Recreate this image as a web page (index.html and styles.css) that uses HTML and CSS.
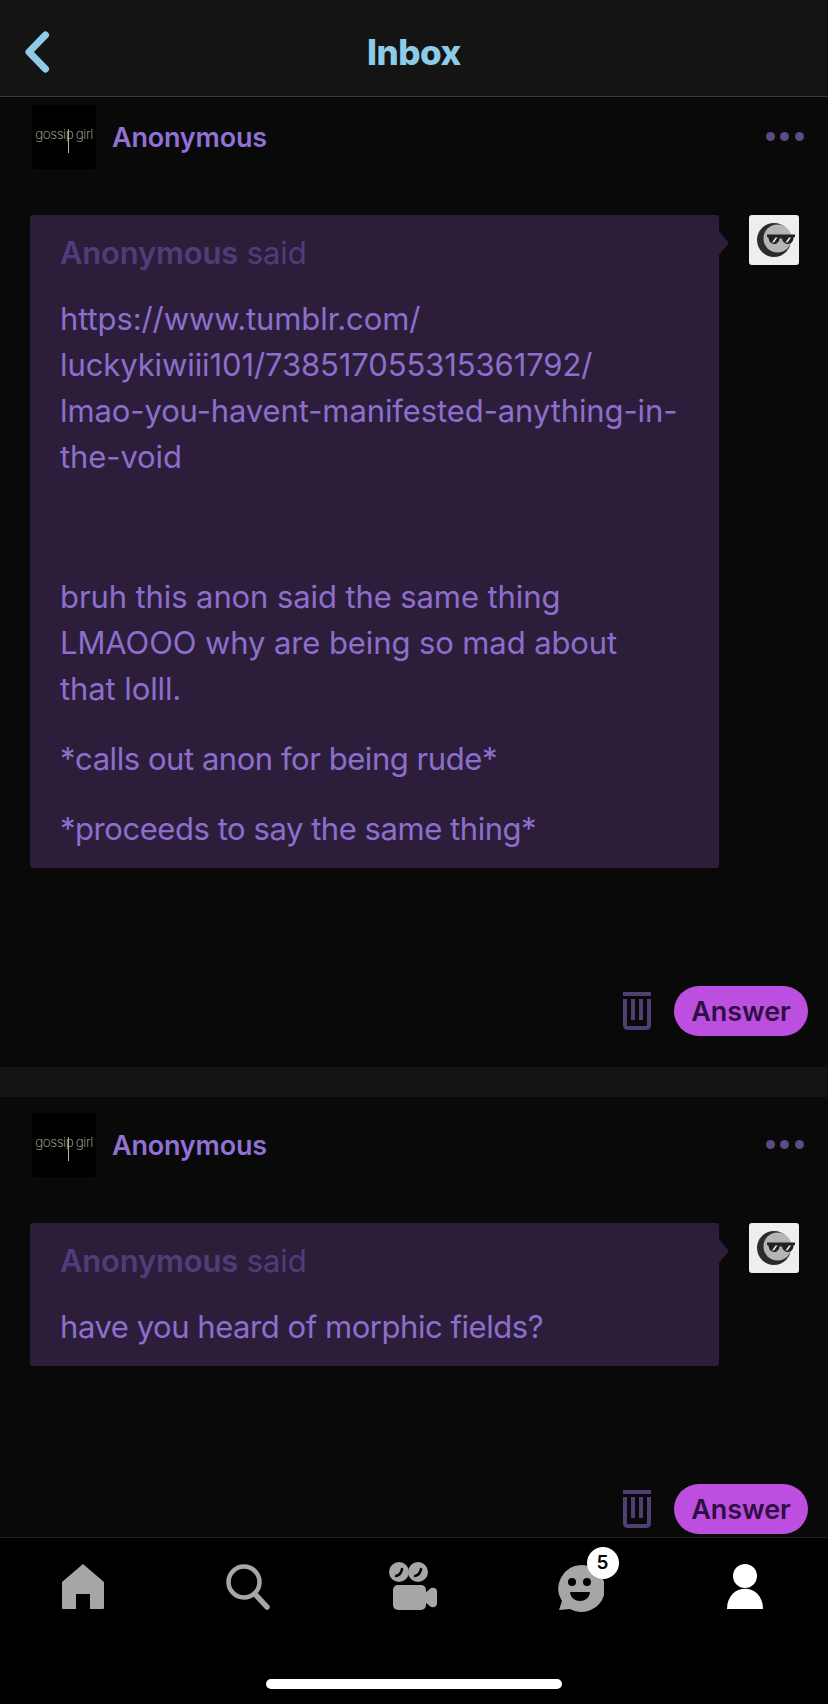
FILE: index.html
```html
<!DOCTYPE html>
<html lang="en">
<head>
  <meta charset="UTF-8">
  <meta name="viewport" content="width=device-width, initial-scale=1.0">
  <title>Inbox</title>
  <link rel="stylesheet" href="styles.css">
</head>
<body>
  <div class="app">
    <header class="top-bar">
      <svg class="back-icon" width="26" height="42" viewBox="0 0 26 42">
        <path d="M21.500 4 L5 21 L21.500 38" fill="none" stroke="#8ecbe8" stroke-width="7" stroke-linecap="round" stroke-linejoin="round"/>
      </svg>
      <h1>Inbox</h1>
    </header>

    <main class="feed">
      <section class="card card-first">
        <div class="card-head">
          <div class="blog-avatar"><span>gossip girl</span><i></i></div>
          <div class="blog-name">Anonymous</div>
          <div class="more"><i></i><i></i><i></i></div>
        </div>
        <div class="ask">
          <div class="bubble">
            <div class="asker"><b>Anonymous</b> said</div>
            <p>https://www.tumblr.com/<br>luckykiwiii101/738517055315361792/<br>lmao-you-havent-manifested-anything-in-<br>the-void</p>
            <p class="gap-big">bruh this anon said the same thing<br>LMAOOO why are being so mad about<br>that lolll.</p>
            <p class="tight">*calls out anon for being rude*</p>
            <p class="tight">*proceeds to say the same thing*</p>
          </div>
          <div class="anon-avatar">
            <svg width="50" height="50" viewBox="0 0 50 50">
              <circle cx="25" cy="25" r="17" fill="#2b2b2b"/>
              <circle cx="28.500" cy="23.500" r="14" fill="#b5b5b5"/>
              <path d="M18 19.500 H46 V22 L44.500 22.500 C44.500 31 34 31 33 23.500 H30.500 C30 31 20 31 19.500 22.500 L18 22 Z" fill="#222"/>
              <path d="M23 27.500 L26.500 22.500 H28.500 L25 27.500 Z M36.500 27.500 L40 22.500 H42 L38.500 27.500 Z" fill="#eee"/>
            </svg>
          </div>
        </div>
        <div class="actions actions-first">
          <svg class="trash" width="30" height="38" viewBox="0 0 30 38">
            <path d="M1 2 H29 M3 7 V33 Q3 36 6 36 H24 Q27 36 27 33 V7 M11 7 V28 M19 7 V28" fill="none" stroke="#4f3f72" stroke-width="4"/>
          </svg>
          <button type="button" class="btn-answer">Answer</button>
        </div>
      </section>

      <section class="card">
        <div class="card-head">
          <div class="blog-avatar"><span>gossip girl</span><i></i></div>
          <div class="blog-name">Anonymous</div>
          <div class="more"><i></i><i></i><i></i></div>
        </div>
        <div class="ask">
          <div class="bubble">
            <div class="asker"><b>Anonymous</b> said</div>
            <p class="tight">have you heard of morphic fields?</p>
          </div>
          <div class="anon-avatar">
            <svg width="50" height="50" viewBox="0 0 50 50">
              <circle cx="25" cy="25" r="17" fill="#2b2b2b"/>
              <circle cx="28.500" cy="23.500" r="14" fill="#b5b5b5"/>
              <path d="M18 19.500 H46 V22 L44.500 22.500 C44.500 31 34 31 33 23.500 H30.500 C30 31 20 31 19.500 22.500 L18 22 Z" fill="#222"/>
              <path d="M23 27.500 L26.500 22.500 H28.500 L25 27.500 Z M36.500 27.500 L40 22.500 H42 L38.500 27.500 Z" fill="#eee"/>
            </svg>
          </div>
        </div>
        <div class="actions">
          <svg class="trash" width="30" height="38" viewBox="0 0 30 38">
            <path d="M1 2 H29 M3 7 V33 Q3 36 6 36 H24 Q27 36 27 33 V7 M11 7 V28 M19 7 V28" fill="none" stroke="#4f3f72" stroke-width="4"/>
          </svg>
          <button type="button" class="btn-answer">Answer</button>
        </div>
      </section>
    </main>

    <nav class="tab-bar">
      <div class="tabs">
        <div class="tab">
          <svg width="44" height="46" viewBox="0 0 44 46">
            <path d="M22 0 L43 18 V44 Q43 45 42 45 H29 V30 H15 V45 H2 Q1 45 1 44 V18 Z" fill="#a6a6a6"/>
          </svg>
        </div>
        <div class="tab">
          <svg width="44" height="46" viewBox="0 0 44 46">
            <circle cx="18" cy="18" r="15.500" fill="none" stroke="#a6a6a6" stroke-width="4.500"/>
            <path d="M29 30 L41 43" fill="none" stroke="#a6a6a6" stroke-width="5.500" stroke-linecap="round"/>
          </svg>
        </div>
        <div class="tab">
          <svg class="tab-camera" width="50" height="48" viewBox="0 0 50 48">
            <rect x="0" y="0" width="20" height="20" rx="10" fill="#a6a6a6"/>
            <rect x="19" y="0" width="20" height="20" rx="10" fill="#a6a6a6"/>
            <rect x="4" y="23" width="33" height="25" rx="5" fill="#a6a6a6"/>
            <path d="M36 31 L42 26 Q48 25 48 30 V41 Q48 46 42 45 L36 40 Z" fill="#a6a6a6"/>
            <path d="M7 14 Q12 13 13 7 M26 14 Q31 13 32 7" fill="none" stroke="#000" stroke-width="2.500" stroke-linecap="round"/>
          </svg>
        </div>
        <div class="tab">
          <div class="tab-activity">
            <svg width="48" height="48" viewBox="0 0 48 48">
              <path d="M25 1 A23.500 23.500 0 1 1 14 45 L3 46 L6 37 A23.500 23.500 0 0 1 25 1 Z" fill="#a6a6a6"/>
              <circle cx="16" cy="18" r="4" fill="#000"/>
              <circle cx="31" cy="18" r="4" fill="#000"/>
              <path d="M14 28 H34 C33 40 15 40 14 28 Z" fill="#000"/>
            </svg>
            <span class="badge">5</span>
          </div>
        </div>
        <div class="tab">
          <svg width="36" height="46" viewBox="0 0 36 46">
            <circle cx="18" cy="12" r="12" fill="#fff"/>
            <path d="M0 45 C0 18 36 18 36 45 Z" fill="#fff"/>
          </svg>
        </div>
      </div>
      <div class="home-indicator"></div>
    </nav>
  </div>
</body>
</html>
```

FILE: styles.css
```css
body {
  font-family: 'Inter', 'Noto Sans', sans-serif;
  background-color: #090909;
  margin: 0;
}

.app {
  display: flex;
  flex-direction: column;
  height: 100vh;
  overflow: hidden;
}

.top-bar {
  display: flex;
  align-items: center;
  justify-content: center;
  position: relative;
  flex: none;
  box-sizing: border-box;
  height: 97px;
  padding-top: 8px;
  background-color: #141414;
  border-bottom: 1px solid #3a3a3a;
}

.top-bar h1 {
  margin: 0;
  font-size: 35px;
  font-weight: 800;
  letter-spacing: -0.5px;
  color: #8ecbe8;
}

.back-icon {
  position: absolute;
  left: 24px;
  top: 31px;
}

.feed {
  flex: 1;
  min-height: 0;
  overflow: hidden;
}

.card {
  padding: 16px 20px 0 30px;
}

.card-first {
  padding-top: 8px;
  border-bottom: 30px solid #141414;
}

.card-head {
  display: flex;
  align-items: center;
  height: 64px;
  padding-left: 2px;
}

.blog-avatar {
  position: relative;
  width: 64px;
  height: 64px;
  background-color: #000;
  border-radius: 2px;
  overflow: hidden;
}

.blog-avatar span {
  display: block;
  margin-top: 20px;
  font-size: 13.500px;
  font-weight: 200;
  line-height: 18px;
  letter-spacing: -0.4px;
  word-spacing: -1px;
  text-align: center;
  white-space: nowrap;
  color: #c4c0a4;
}

.blog-avatar i {
  position: absolute;
  left: 36px;
  top: 24px;
  width: 1px;
  height: 24px;
  background-color: #b5b198;
}

.blog-name {
  flex: 1;
  margin-left: 16px;
  font-size: 27px;
  font-weight: 600;
  letter-spacing: -0.2px;
  color: #9270d4;
}

.more {
  display: flex;
  gap: 5.500px;
  margin: -1px 4.500px 0 0;
}

.more i {
  width: 9px;
  height: 9px;
  border-radius: 50%;
  background-color: #5b4a85;
}

.ask {
  display: flex;
  align-items: flex-start;
  margin-top: 46px;
}

.bubble {
  position: relative;
  width: 689px;
  box-sizing: border-box;
  padding: 15px 30px 16px;
  background-color: #2c1e3a;
  border-radius: 3px;
  font-size: 31px;
  line-height: 46px;
  letter-spacing: -0.1px;
  color: #8c6fcd;
}

.bubble::after {
  content: "";
  position: absolute;
  right: -10px;
  top: 16px;
  border-left: 10px solid #2c1e3a;
  border-top: 12px solid transparent;
  border-bottom: 12px solid transparent;
}

.bubble p {
  margin: 24px 0 0;
  white-space: nowrap;
}

.bubble p.gap-big {
  margin-top: 94px;
}

.bubble p.tight {
  letter-spacing: -0.45px;
}

.asker {
  color: #4f3d7a;
}

.asker b {
  font-weight: 600;
  letter-spacing: -0.2px;
}

.asker + p {
  margin-top: 20px;
}

.anon-avatar {
  flex: none;
  width: 50px;
  height: 50px;
  margin-left: 30px;
  background-color: #eeeeee;
  border-radius: 3px;
}

.anon-avatar svg {
  display: block;
}

.actions {
  display: flex;
  align-items: center;
  justify-content: flex-end;
  gap: 22px;
  margin-top: 118px;
}

.actions-first {
  padding-bottom: 31px;
}

.btn-answer {
  height: 50px;
  width: 134px;
  padding: 0;
  border: none;
  border-radius: 25px;
  background-color: #bd4fe0;
  color: #2e0f44;
  font-family: inherit;
  font-size: 27px;
  font-weight: 600;
  letter-spacing: -0.1px;
}

.tab-bar {
  flex: none;
  height: 166px;
  background-color: #000;
  border-top: 1px solid #222;
}

.tabs {
  display: grid;
  grid-template-columns: repeat(5, 1fr);
  padding-top: 26px;
}

.tab {
  display: flex;
  justify-content: center;
  align-items: flex-start;
  height: 50px;
}

.tab-camera {
  margin-top: -2px;
}

.tab-activity {
  position: relative;
  height: 48px;
}

.badge {
  position: absolute;
  left: 31px;
  top: -17px;
  width: 32px;
  height: 32px;
  border-radius: 50%;
  background-color: #fff;
  color: #000;
  font-size: 19px;
  font-weight: 600;
  line-height: 32px;
  text-align: center;
}

.home-indicator {
  width: 296px;
  height: 10px;
  margin: 65px auto 0;
  background-color: #fff;
  border-radius: 5px;
}
```
